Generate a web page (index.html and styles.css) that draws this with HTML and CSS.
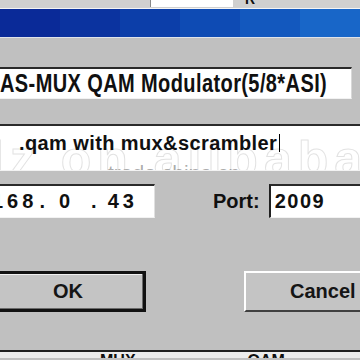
FILE: index.html
```html
<!DOCTYPE html>
<html lang="en">
<head>
    <meta charset="UTF-8">
    <title>Device Settings</title>
    <link rel="stylesheet" href="styles.css">
</head>
<body>
    <div id="screen">
        <!-- window behind the dialog -->
        <div class="behind">
            <span class="behind-dash">&mdash;</span>
            <span class="behind-field"></span>
            <span class="behind-label">R</span>
        </div>

        <!-- title bar, drawn as bands of the gradient -->
        <div class="titlebar">
            <div class="band b1"></div>
            <div class="band b2"></div>
            <div class="band b3"></div>
            <div class="band b4"></div>
            <div class="band b5"></div>
            <div class="band b6"></div>
        </div>

        <div class="client">
            <div class="field name-field">
                <span class="field-text tall">AS-MUX QAM Modulator(5/8*ASI)</span>
            </div>

            <div class="field desc-field">
                <span class="watermark-big">lz on alibaba</span>
                <span class="field-text">.qam with mux&amp;scrambler</span><span class="caret"></span>
                <span class="watermark">trade.china.cn</span>
            </div>

            <div class="addr-row">
                <div class="field ip-field">
                    <span class="octet">168</span>
                    <span class="dot first">.</span>
                    <span class="octet">0</span>
                    <span class="dot second">.</span>
                    <span class="octet">43</span>
                </div>
                <label class="port-label">Port:</label>
                <div class="field port-field">2009</div>
            </div>

            <div class="buttons">
                <button class="btn default">OK</button>
                <button class="btn cancel">Cancel</button>
            </div>
        </div>

        <div class="below">
            <span class="below-text mid">MUX</span>
            <span class="below-text right">QAM</span>
        </div>
    </div>
</body>
</html>
```

FILE: styles.css
```css
/* General Reset */
* {
    margin: 0;
    padding: 0;
    box-sizing: border-box;
}
body {
    width: 360px;
    height: 360px;
    overflow: hidden;
    background-color: #c0c0c0;
    font-family: 'Liberation Sans', Arial, sans-serif;
    color: #101010;
}
#screen {
    display: flex;
    flex-direction: column;
    width: 360px;
    height: 360px;
    overflow: hidden;
}
#screen > * {
    flex-shrink: 0;
}
/* Window behind */
.behind {
    display: flex;
    align-items: flex-start;
    height: 9px;
    background-color: #d0d0d0;
    border-bottom: 1px solid #f4f4f4;
    overflow: hidden;
}
.behind-dash {
    margin-left: 100px;
    margin-top: -10px;
    font-size: 16px;
    font-weight: bold;
}
.behind-field {
    width: 83px;
    height: 7px;
    margin-left: 34px;
    background-color: #ffffff;
    border-left: 1px solid #888;
}
.behind-label {
    margin-left: 12px;
    margin-top: -9px;
    font-size: 14px;
    font-weight: bold;
}
/* Title bar */
.titlebar {
    display: flex;
    height: 29px;
    background-color: #0d43b0;
    border-bottom: 1px solid #dfe3ea;
}
.band {
    flex: 1;
}
.b1 { background-color: #0a2a98; }
.b2 { background-color: #0b339f; }
.b3 { background-color: #0c3ea9; }
.b4 { background-color: #0e4bb4; }
.b5 { background-color: #1358be; }
.b6 { background-color: #1866c8; }
/* Dialog client area */
.client {
    display: flex;
    flex-direction: column;
    padding-top: 29px;
}
.field {
    display: flex;
    align-items: center;
    background-color: #ffffff;
    border-top: 2px solid #2a2a2a;
    border-bottom: 1px solid #f2f2f2;
    font-size: 20px;
    font-weight: bold;
    white-space: nowrap;
}
.field-text {
    position: relative;
    display: inline-block;
    letter-spacing: 0.4px;
}
.field-text.tall {
    transform: scaleY(1.25);
}
.name-field {
    width: 352px;
    height: 32px;
    border-right: 1px solid #d8d8d8;
}
.desc-field {
    position: relative;
    height: 47px;
    margin-top: 25px;
    padding-left: 19px;
    padding-bottom: 10px;
    overflow: hidden;
}
.caret {
    position: relative;
    width: 1px;
    height: 18px;
    margin-left: 2px;
    background-color: #000000;
}
.watermark {
    position: absolute;
    left: 108px;
    top: 35px;
    font-size: 21px;
    font-weight: normal;
    color: rgba(90, 90, 90, 0.5);
}
.watermark-big {
    position: absolute;
    left: -10px;
    top: 4px;
    font-size: 50px;
    font-weight: bold;
    letter-spacing: 6px;
    color: transparent;
    -webkit-text-stroke: 1px rgba(160, 160, 160, 0.3);
}
/* IP + port row */
.addr-row {
    display: flex;
    align-items: center;
    margin-top: 13px;
    height: 34px;
}
.ip-field {
    width: 163px;
    height: 34px;
    margin-left: -8px;
    border-right: 1px solid #e0e0e0;
}
.octet {
    letter-spacing: 4px;
}
.dot.first {
    margin: 0 14px 0 2px;
}
.dot.second {
    margin: 0 11px 0 17px;
}
.port-label {
    margin-left: 58px;
    font-size: 20px;
    font-weight: bold;
}
.port-field {
    flex: 1;
    height: 34px;
    margin-left: 9px;
    margin-right: -8px;
    padding-left: 4px;
    border-left: 2px solid #202020;
    letter-spacing: 1.5px;
}
/* Buttons */
.buttons {
    display: flex;
    justify-content: space-between;
    margin-top: 53px;
}
.btn {
    height: 41px;
    font-family: 'Liberation Sans', Arial, sans-serif;
    font-size: 20px;
    font-weight: bold;
    color: #151515;
    background-color: #c4c4c4;
    border: 2px solid;
    border-color: #ffffff #404040 #404040 #ffffff;
}
.btn.default {
    width: 156px;
    margin-left: -10px;
    border: 3px solid #111111;
    box-shadow: inset -1px -1px 0 #6a6a6a, inset 1px 1px 0 #f0f0f0;
}
.btn.cancel {
    width: 126px;
    margin-right: -10px;
    text-align: left;
    padding-left: 44px;
}
/* Window below */
.below {
    display: flex;
    height: 8px;
    margin-top: 38px;
    background-color: #ececec;
    border-top: 2px solid #202020;
    overflow: hidden;
}
.below-text {
    margin-top: 1px;
    font-size: 16px;
    font-weight: bold;
    line-height: 16px;
}
.below-text.mid {
    margin-left: 100px;
}
.below-text.right {
    margin-left: 112px;
}
```
